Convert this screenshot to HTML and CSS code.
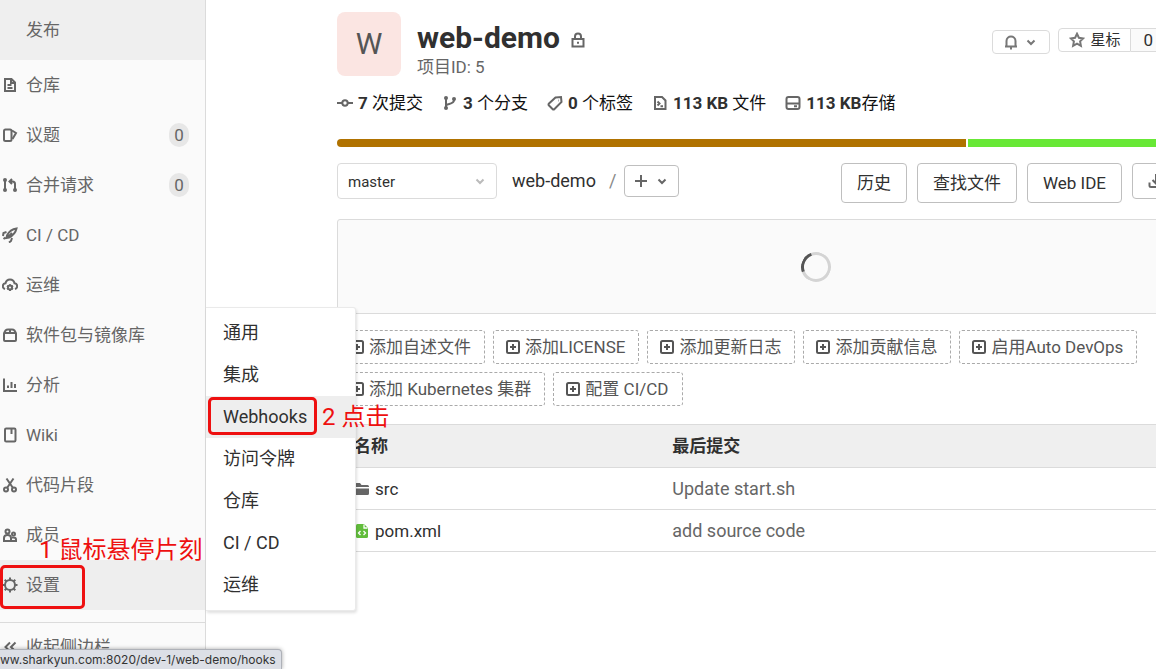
FILE: index.html
```html
<!DOCTYPE html>
<html lang="zh-CN">
<head>
<meta charset="utf-8">
<meta name="viewport" content="width=device-width">
<title>web-demo</title>
<link rel="stylesheet" href="styles.css">
</head>
<body>
<svg class="sprite" aria-hidden="true">
  <symbol id="plus-square" viewBox="0 0 16 16"><rect x="2" y="2" width="12" height="12" rx="1.5"/><path d="M8 5v6M5 8h6"/></symbol>
  <symbol id="chevron" viewBox="0 0 16 16"><path d="M4.5 6.5 8 10l3.500-3.500"/></symbol>
</svg>
<div class="app">
  <nav class="sidebar" aria-label="项目导航">
    <a class="nav sub-open" href="#"><span>发布</span></a>
    <a class="nav" href="#"><svg class="icon" viewBox="0 0 16 16"><path d="M3 2h6.500L13 5.500V14H3zM5.500 8h4M5.500 11h5M9 2.500V6h3.500"/></svg><span>仓库</span></a>
    <a class="nav" href="#"><svg class="icon" viewBox="0 0 16 16"><rect x="2" y="2.500" width="7.500" height="11.500" rx="1.500"/><path d="M10 3.500l4 2.500-3.500 6"/></svg><span>议题</span><b class="badge">0</b></a>
    <a class="nav" href="#"><svg class="icon" viewBox="0 0 16 16"><path d="M3 4v8M13 12V7q0-2.500-2.500-2.500H8M10 2 7.500 4.500 10 7"/><g class="solid"><circle cx="3" cy="3" r="2"/><circle cx="3" cy="13" r="2"/><circle cx="13" cy="13" r="2"/></g></svg><span>合并请求</span><b class="badge">0</b></a>
    <a class="nav" href="#"><svg class="icon" viewBox="0 0 16 16"><path d="M14.500 1.500C10 2 7 4.500 5 8.500L4.500 11l2.500-.5c4-2 6.500-4.500 7.500-9zM5 11l5-5M4.500 5 1.500 6 1 9M10 11l-1 3-2 1.500M1.500 12l2-1.500"/></svg><span>CI / CD</span></a>
    <a class="nav" href="#"><svg class="icon" viewBox="0 0 16 16"><path d="M3 12C1.500 11.500.8 10.500.8 9.200.8 7.500 2 6.500 3.500 6.300 4 4 5.700 2.500 8 2.500s4 1.500 4.500 3.800c1.500.2 2.700 1.200 2.700 2.900 0 1.300-.7 2.300-2.200 2.800"/><circle cx="8" cy="10.500" r="2"/><path d="M8 7.200v1.300M8 12.500v1.500M5 8.800l1.300.7M9.700 11.500l1.300.7M5 12.200l1.300-.7M9.700 9.500l1.300-.7"/></svg><span>运维</span></a>
    <a class="nav" href="#"><svg class="icon" viewBox="0 0 16 16"><rect x="2" y="6" width="12" height="8" rx="1"/><path d="M2 7c.5-2.500 2-4.500 4-4.500h4c2 0 3.500 2 4 4.500M8 2.500V6"/></svg><span>软件包与镜像库</span></a>
    <a class="nav" href="#"><svg class="icon" viewBox="0 0 16 16"><path d="M2 1.500V14h13M6 11V8.500M9.500 11V5M13 11V7"/></svg><span>分析</span></a>
    <a class="nav" href="#"><svg class="icon" viewBox="0 0 16 16"><rect x="3" y="1.500" width="10.500" height="13" rx="1.200"/><path d="M9.500 2v5"/></svg><span>Wiki</span></a>
    <a class="nav" href="#"><svg class="icon" viewBox="0 0 16 16"><path d="M4.500 1.500 11 11M11.500 1.500 5 11"/><circle cx="4" cy="12.500" r="2"/><circle cx="12" cy="12.500" r="2"/></svg><span>代码片段</span></a>
    <a class="nav" href="#"><svg class="icon" viewBox="0 0 16 16"><circle cx="5.500" cy="4.500" r="2"/><circle cx="11.500" cy="7" r="1.500"/><path d="M2 14v-3q0-3 3.500-3T9 11v3zM9 14h5v-1.500q0-2-2.500-2H10"/></svg><span>成员</span></a>
    <a class="nav active" href="#"><svg class="icon" viewBox="0 0 16 16"><circle cx="8" cy="8" r="5"/><path d="M8 .5v2.500M8 13v2.500M.5 8H3M13 8h2.500M2.700 2.700l1.800 1.800M11.500 11.500l1.800 1.800M2.700 13.300l1.800-1.800M11.500 4.500l1.800-1.800"/></svg><span>设置</span></a>
    <button class="collapse" type="button"><svg class="icon" viewBox="0 0 16 16"><path d="M8 3.500 3.500 8 8 12.500M13.500 3.500 9 8l4.500 4.500"/></svg><span>收起侧边栏</span></button>
    <div class="flyout">
      <a href="#">通用</a><a href="#">集成</a><a class="current" href="#">Webhooks</a><a href="#">访问令牌</a><a href="#">仓库</a><a href="#">CI / CD</a><a href="#">运维</a>
    </div>
  </nav>

  <main class="main">
    <div class="content">
      <header class="project">
        <div class="avatar">W</div>
        <div class="title">
          <h1>web-demo <svg class="icon" viewBox="0 0 16 16"><rect x="2.500" y="7" width="11" height="7.500"/><path d="M5 7V4.500C5 .5 11 .5 11 4.500V7M7 10.800h2"/></svg></h1>
          <p>项目ID: 5</p>
        </div>
        <div class="actions">
          <button class="small bell" type="button" aria-label="通知"><svg class="icon" viewBox="0 0 16 16"><path d="M2 12.500h12M3.500 12V7c0-6 9-6 9 0v5M7 14.500h2"/></svg><svg class="icon"><use href="#chevron"/></svg></button>
          <div class="star">
            <button class="small" type="button"><svg class="icon" viewBox="0 0 16 16"><path d="m8 1.800 1.900 4 4.300.6-3.100 3 .8 4.400L8 11.700l-3.900 2.100.8-4.400-3.100-3 4.300-.6z"/></svg>星标</button>
            <a class="count" href="#">0</a>
          </div>
        </div>
      </header>

      <div class="stats">
        <a href="#"><svg class="icon" viewBox="0 0 16 16"><circle cx="8" cy="8" r="2.700"/><path d="M0 8h5M11 8h5"/></svg><span><b>7</b> 次提交</span></a>
        <a href="#"><svg class="icon" viewBox="0 0 16 16"><path d="M4 4v9M4 11c0-3 8-1 8-6"/><g class="solid"><circle cx="4" cy="3" r="2"/><circle cx="4" cy="13" r="2"/><circle cx="12" cy="4" r="2"/></g></svg><span><b>3</b> 个分支</span></a>
        <a href="#"><svg class="icon" viewBox="0 0 16 16"><path d="M8.500 2.500 14 2l.5 5-7 7q-1 1-2 0L2 10.500q-1-1 0-2z"/><path d="M11 5.500h.5"/></svg><span><b>0</b> 个标签</span></a>
        <a href="#"><svg class="icon" viewBox="0 0 16 16"><path d="M3 2h7l3.500 3.500V14H3zM5.500 6.500l2 2-2 2M8.500 11.200h2.500"/></svg><span><b>113 KB</b> 文件</span></a>
        <a href="#"><svg class="icon" viewBox="0 0 16 16"><rect x="1.500" y="2" width="13" height="12" rx="2"/><path d="M2 8.500h12M9 11.300h3"/></svg><span><b>113 KB</b>存储</span></a>
      </div>

      <div class="languages"><span class="java"></span><span class="shell"></span></div>

      <div class="toolbar">
        <label class="branch"><select aria-label="分支"><option>master</option></select><svg class="icon"><use href="#chevron"/></svg></label>
        <div class="crumbs"><a href="#">web-demo</a><span>/</span><button class="add" type="button" aria-label="添加"><svg class="icon" viewBox="0 0 16 16"><path d="M8 2v12M2 8h12"/></svg><svg class="icon"><use href="#chevron"/></svg></button></div>
        <div class="tools">
          <button type="button">历史</button><button type="button">查找文件</button><button type="button">Web IDE</button>
          <button class="download" type="button" aria-label="下载"><svg class="icon" viewBox="0 0 16 16"><path d="M8 1v9M4.500 7 8 10.500 11.500 7M1.500 9.500v3q0 1.500 1.500 1.500h10q1.500 0 1.500-1.500v-3"/></svg></button>
        </div>
      </div>

      <div class="loading"><span class="spinner" role="status" aria-label="加载中"></span></div>

      <div class="chips">
        <a href="#"><svg class="icon"><use href="#plus-square"/></svg>添加自述文件</a>
        <a href="#"><svg class="icon"><use href="#plus-square"/></svg>添加LICENSE</a>
        <a href="#"><svg class="icon"><use href="#plus-square"/></svg>添加更新日志</a>
        <a href="#"><svg class="icon"><use href="#plus-square"/></svg>添加贡献信息</a>
        <a href="#"><svg class="icon"><use href="#plus-square"/></svg>启用Auto DevOps</a>
        <a href="#"><svg class="icon"><use href="#plus-square"/></svg>添加 Kubernetes 集群</a>
        <a href="#"><svg class="icon"><use href="#plus-square"/></svg>配置 CI/CD</a>
      </div>

      <table class="files">
        <thead><tr><th class="name">名称</th><th>最后提交</th></tr></thead>
        <tbody>
          <tr><td class="name"><a href="#"><svg class="icon folder" viewBox="0 0 16 16"><path d="M1 3.500q0-1.500 1.500-1.500H6l1.500 2h6q1.500 0 1.500 1.500V6H1zM1 7.500h14v5q0 1.500-1.500 1.500h-11Q1 14 1 12.500z"/></svg>src</a></td><td>Update start.sh</td></tr>
          <tr><td class="name"><a href="#"><svg class="icon code" viewBox="0 0 16 16"><path class="sheet" d="M3.500 1H10l4 4v8.500q0 1.500-1.500 1.500h-9Q2 15 2 13.500v-11Q2 1 3.500 1z"/><path class="mark" d="M6.500 8l-2 2 2 2M9.500 8l2 2-2 2M10 1.500V5h3.500"/></svg>pom.xml</a></td><td>add source code</td></tr>
        </tbody>
      </table>
    </div>
  </main>
</div>

<div class="mark-box settings-box"></div>
<div class="mark-text settings-text">1 鼠标悬停片刻</div>
<div class="mark-box hooks-box"></div>
<div class="mark-text hooks-text">2 点击</div>
<div class="status">ww.sharkyun.com:8020/dev-1/web-demo/hooks</div>
</body>
</html>
```
FILE: styles.css
```css
* { box-sizing: border-box; }
body {
  margin: 0;
  height: 100vh;
  overflow: hidden;
  background: #fff;
  color: #303030;
  font: 17px/24px Roboto, "Noto Sans CJK SC", sans-serif;
}
a { color: inherit; text-decoration: none; }
button, select { font: inherit; color: inherit; }
.sprite { position: absolute; width: 0; height: 0; }
.icon {
  width: 16px;
  height: 16px;
  flex: none;
  fill: none;
  stroke: #666;
  stroke-width: 2;
}
.icon .solid { fill: #666; stroke: none; }

.app { display: flex; height: 100vh; }
.sidebar {
  position: relative;
  flex: none;
  width: 206px;
  background: #fafafa;
  border-right: 1px solid #dbdbdb;
  color: #666;
}
.nav {
  display: flex;
  align-items: center;
  gap: 8px;
  height: 50px;
  padding: 0 16px 0 2px;
}
.sub-open { height: 60px; padding-left: 26px; background: #efefef; }
.active { background: #eee; }
.badge {
  margin-left: auto;
  width: 20px;
  border-radius: 12px;
  background: #e7e7e7;
  font-weight: 400;
  text-align: center;
}
.collapse {
  display: flex;
  align-items: center;
  gap: 8px;
  width: 100%;
  height: 48px;
  margin-top: 12px;
  padding: 0 2px;
  border: 0;
  border-top: 1px solid #dbdbdb;
  background: none;
}
.flyout {
  position: absolute;
  z-index: 2;
  top: 307px;
  left: 206px;
  width: 150px;
  padding: 4px 0;
  border: 1px solid #eaeaea;
  border-left: 0;
  border-radius: 0 3px 3px 0;
  background: #fff;
  box-shadow: 1px 2px 3px rgba(0, 0, 0, .12);
  color: #303030;
  font-size: 18px;
}
.flyout a { display: block; padding: 9px 17px; }
.flyout .current { background: #eee; }

.main { flex: 1; min-width: 0; overflow: hidden; padding: 12px 0 0 131px; }
.content { margin-right: -139px; }
.project { display: flex; gap: 16px; height: 64px; padding-right: 129px; }
.avatar {
  flex: none;
  width: 64px;
  border-radius: 8px;
  background: #fbe5e2;
  color: #555;
  font-size: 30px;
  line-height: 64px;
  text-align: center;
}
.title { flex: 1; }
h1 { display: flex; align-items: center; gap: 10px; margin: 9px 0 0; font-size: 30px; line-height: 34px; }
.title p { margin: 0; color: #666; }
h1 .icon { margin-top: 4px; }
.actions { display: flex; align-items: flex-start; gap: 8px; padding-top: 16px; font-size: 15px; }
.small {
  display: flex;
  align-items: center;
  gap: 5px;
  height: 24px;
  padding: 0 10px;
  border: 1px solid #dbdbdb;
  border-radius: 4px;
  background: #fff;
}
.bell { gap: 4px; margin-top: 2px; }
.bell .icon, .star .icon { stroke: #777; }
.star { display: flex; }
.star .small { border-radius: 4px 0 0 4px; }
.count { padding: 0 12px; border: 1px solid #dbdbdb; border-left: 0; background: #fafafa; line-height: 22px; font-size: 17px; }
.stats { display: flex; gap: 19px; margin-top: 15px; color: #111; }
.stats a { display: flex; align-items: center; gap: 5px; }
.stats b { color: #303030; }
.languages { display: flex; gap: 2px; height: 8px; margin-top: 24px; border-radius: 4px; overflow: hidden; }
.java { flex: 629; background: #b07200; }
.shell { flex: 327; background: #68e836; }

.toolbar { display: flex; align-items: flex-start; margin-top: 16px; padding-right: 107px; }
.branch { display: flex; align-items: center; position: relative; }
.branch select {
  width: 160px;
  height: 36px;
  padding: 2px 10px 0;
  border: 1px solid #dbdbdb;
  border-radius: 4px;
  appearance: none;
  background: #fff;
  font-size: 15px;
}
.branch .icon { position: absolute; right: 9px; stroke: #bbb; pointer-events: none; }
.crumbs { display: flex; align-items: center; margin: 2px 0 0 15px; font-size: 18px; }
.crumbs span { margin: 0 8px 0 13px; color: #888; }
.toolbar button { border: 1px solid #bfbfbf; border-radius: 4px; background: #fff; }
.toolbar .add { display: flex; align-items: center; gap: 5px; height: 32px; padding: 0 8px; }
.tools { display: flex; align-items: flex-start; gap: 10px; margin-left: auto; }
.tools button { height: 40px; padding: 0 15px; }
.tools .download { display: flex; align-items: center; height: 36px; width: 56px; }
.loading {
  display: grid;
  place-items: center;
  height: 95px;
  margin-top: 16px;
  border: 1px solid #dbdbdb;
  border-radius: 3px 3px 0 0;
  background: #fafafa;
}
.spinner {
  width: 30px;
  height: 30px;
  border: 3px solid #d4d4d4;
  border-left-color: #555;
  border-radius: 50%;
  transform: rotate(25deg);
}
.chips { display: flex; flex-wrap: wrap; gap: 8px; margin-top: 16px; padding-right: 120px; color: #555; }
.chips a {
  display: flex;
  align-items: center;
  gap: 4px;
  height: 34px;
  padding: 0 13px 0 11px;
  border: 1px dashed #aaa;
  border-radius: 3px;
}
.chips .icon { stroke: #555; }
.files { width: 100%; margin-top: 18px; border-collapse: collapse; table-layout: fixed; }
.files th { height: 43px; background: #efefef; text-align: left; font-weight: 700; }
.files th, .files td { padding: 0; border-top: 1px solid #dbdbdb; border-bottom: 1px solid #dbdbdb; }
.files td { height: 42px; color: #666; font-size: 18px; }
.files .name { width: 35%; padding-left: 17px; font-size: 17px; }
.files a { display: flex; align-items: center; gap: 5px; color: #303030; }
.files .folder { fill: #666; stroke: none; }
.files .code { stroke: none; }
.code .sheet { fill: #62bd3c; }
.code .mark { stroke: #fff; stroke-width: 1.300; }

.mark-box { position: absolute; z-index: 3; border: 3px solid #ee1010; border-radius: 5px; }
.settings-box { left: 0; top: 565px; width: 85px; height: 44px; }
.hooks-box { left: 208px; top: 397px; width: 109px; height: 38px; }
.mark-text { position: absolute; z-index: 3; color: #ee1010; font-size: 24px; line-height: 28px; white-space: nowrap; }
.settings-text { left: 39px; top: 536px; }
.hooks-text { left: 322px; top: 403px; }
.status {
  position: absolute;
  z-index: 4;
  left: 0;
  bottom: 0;
  padding: 0 5px 0 0;
  border: 1px solid #aeb1b8;
  border-width: 1px 1px 0 0;
  border-radius: 0 4px 0 0;
  background: #dcdfe6;
  box-shadow: 0 0 4px rgba(0, 0, 0, .35);
  color: #333;
  font: 12px/19px Inter, sans-serif;
}
```
